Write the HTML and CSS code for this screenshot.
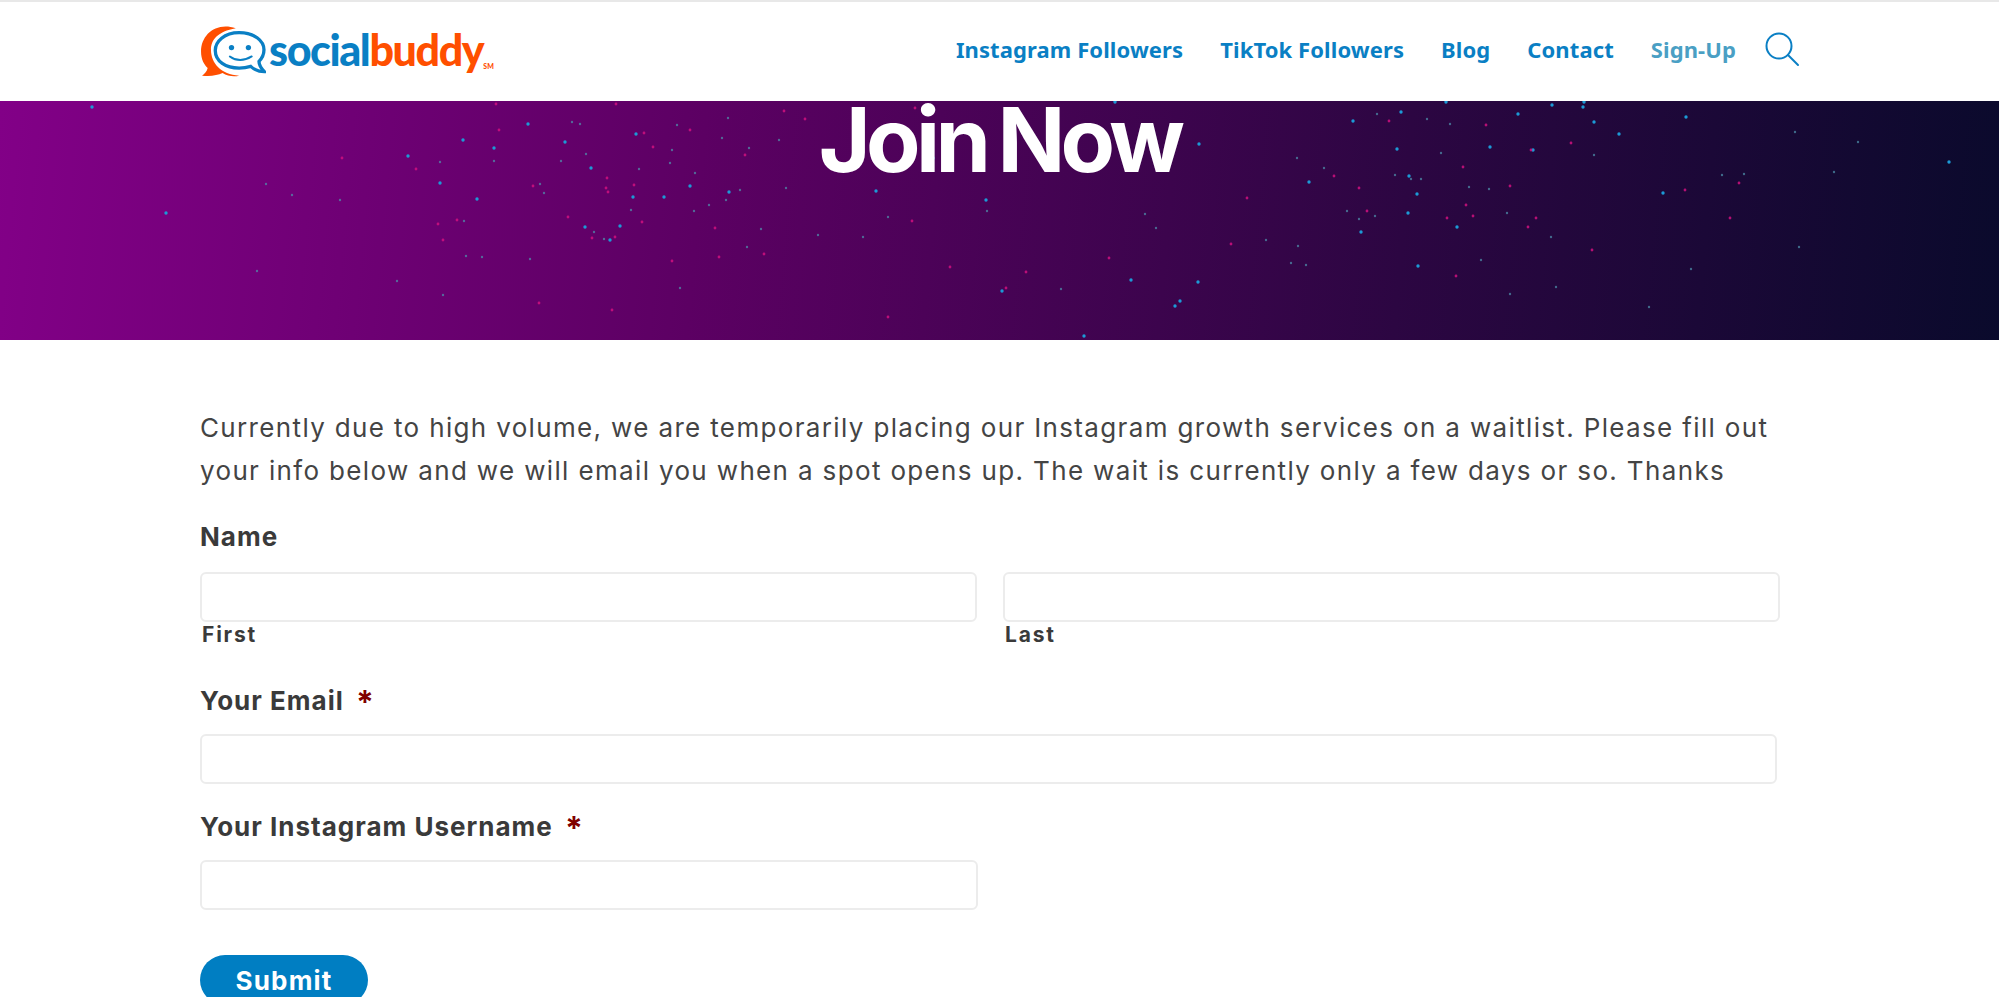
FILE: index.html
```html
<!DOCTYPE html>
<html lang="en">
<head>
    <meta charset="UTF-8">
    <meta name="viewport" content="width=device-width, initial-scale=1.0">
    <title>Join Now</title>

    <link rel="stylesheet" href="styles.css">

</head>
<body>

<header class="topbar">
    <div class="topbar-inner">
        <a class="logo" href="/">
            <svg class="logo-mark" viewBox="60 75 200 160" width="67" height="53">
                <path d="M170 85C110 65 65 105 65 155c0 25 10 40 20 50-2 10-10 19-17 23 27 4 47-2 62-8 15 10 35 12 50 8-55-3-85-38-85-78 0-30 20-55 75-65z" fill="#ff4f00"/>
                <path d="M180 98c-45 0-72 27-72 54 0 33 32 53 72 53 15 0 25-2 35-5 13 12 27 16 41 16-10-11-16-21-16-31 10-10 15-20 15-35 0-28-30-52-75-52z" fill="#fff" stroke="#0a7fc4" stroke-width="10"/>
                <circle cx="157" cy="143" r="8" fill="#0a7fc4"/>
                <circle cx="208" cy="143" r="8" fill="#0a7fc4"/>
                <path d="M152 170q30 22 66 0" fill="none" stroke="#0a7fc4" stroke-width="6" stroke-linecap="round"/>
            </svg>
            <span class="logo-word logo-social">social</span><span class="logo-word logo-buddy">buddy</span><span class="logo-sm">SM</span>
        </a>
        <nav class="mainnav">
            <a href="#">Instagram Followers</a>
            <a href="#">TikTok Followers</a>
            <a href="#">Blog</a>
            <a href="#">Contact</a>
            <a href="#" class="current">Sign-Up</a>
            <a href="#" class="search">
                <svg viewBox="0 0 36 36" width="36" height="36" fill="none" stroke="#0a7fc4" stroke-width="2">
                    <circle cx="15" cy="15" r="12.5"/>
                    <path d="M24 24l10 10" stroke-linecap="round"/>
                </svg>
            </a>
        </nav>
    </div>
</header>

<section class="hero">
    <svg class="stars" viewBox="0 0 1999 239">
        <path class="star-blue" d="M92 6h.01M166 112h.01M408 55h.01M494 47h.01M528 23h.01M565 41h.01M636 33h.01M591 67h.01M690 85h.01M633 96h.01M664 96h.01M729 91h.01M440 82h.01M463 39h.01M477 98h.01M620 125h.01M585 126h.01M610 139h.01M1115 1h.01M933 57h.01M876 90h.01M986 99h.01M1199 43h.01M1309 81h.01M1353 20h.01M1397 48h.01M1180 200h.01M1175 205h.01M1084 235h.01M1198 181h.01M1002 190h.01M1131 179h.01M1446 1h.01M1401 11h.01M1518 13h.01M1552 4h.01M1583 6h.01M1584 1h.01M1594 21h.01M1619 33h.01M1686 16h.01M1490 46h.01M1533 49h.01M1409 75h.01M1417 93h.01M1408 112h.01M1457 126h.01M1663 92h.01M1949 61h.01M1418 165h.01M1361 131h.01"/>
        <path class="star-dim" d="M266 83h.01M292 94h.01M340 99h.01M257 170h.01M440 61h.01M494 60h.01M572 21h.01M580 23h.01M561 60h.01M586 53h.01M639 68h.01M677 24h.01M672 49h.01M670 62h.01M695 72h.01M726 99h.01M544 92h.01M540 83h.01M631 109h.01M694 110h.01M709 104h.01M594 131h.01M604 138h.01M466 155h.01M482 156h.01M530 158h.01M747 146h.01M761 128h.01M722 37h.01M779 39h.01M749 47h.01M728 17h.01M443 194h.01M397 180h.01M680 187h.01M786 87h.01M740 89h.01M464 120h.01M987 110h.01M888 116h.01M818 134h.01M863 136h.01M1297 57h.01M1324 67h.01M1377 13h.01M1395 74h.01M1145 113h.01M1156 127h.01M1266 139h.01M1298 145h.01M1291 162h.01M1306 164h.01M1347 110h.01M1359 118h.01M1375 115h.01M1061 188h.01M1427 18h.01M1450 23h.01M1594 54h.01M1441 52h.01M1411 78h.01M1421 78h.01M1489 88h.01M1507 112h.01M1551 136h.01M1722 74h.01M1744 73h.01M1795 31h.01M1858 41h.01M1834 71h.01M1799 146h.01M1691 168h.01M1481 159h.01M1556 186h.01M1510 193h.01M1649 206h.01M1469 86h.01"/>
        <path class="star-pink" d="M342 57h.01M416 68h.01M499 29h.01M496 3h.01M616 3h.01M690 29h.01M784 10h.01M644 32h.01M653 46h.01M745 54h.01M607 77h.01M606 87h.01M608 91h.01M634 84h.01M533 85h.01M568 116h.01M457 119h.01M438 123h.01M443 139h.01M615 136h.01M592 137h.01M642 121h.01M672 160h.01M764 153h.01M539 202h.01M612 209h.01M719 156h.01M715 127h.01M805 18h.01M912 120h.01M1026 171h.01M1006 187h.01M1231 143h.01M1247 97h.01M1359 87h.01M1367 110h.01M1389 20h.01M1334 75h.01M888 216h.01M950 166h.01M1109 157h.01M915 7h.01M1486 24h.01M1531 49h.01M1571 42h.01M1463 66h.01M1510 85h.01M1466 104h.01M1447 117h.01M1473 115h.01M1536 117h.01M1528 126h.01M1592 149h.01M1730 117h.01M1739 82h.01M1456 175h.01M1685 89h.01"/>
    </svg>
    <h1>Join Now</h1>
</section>

<main class="container">
    <p class="intro">Currently due to high volume, we are temporarily placing our Instagram growth services on a waitlist. Please fill out your info below and we will email you when a spot opens up. The wait is currently only a few days or so. Thanks</p>

    <form class="signup">
        <label class="field-label">Name</label>
        <div class="name-row">
            <div>
                <input type="text" id="first">
                <label class="sub-label" for="first">First</label>
            </div>
            <div>
                <input type="text" id="last">
                <label class="sub-label" for="last">Last</label>
            </div>
        </div>

        <label class="field-label" for="email">Your Email <span class="req">*</span></label>
        <input type="email" id="email" class="email-input">

        <label class="field-label" for="insta">Your Instagram Username <span class="req">*</span></label>
        <input type="text" id="insta" class="half-input">

        <button type="submit">Submit</button>
    </form>
</main>

</body>
</html>
```

FILE: styles.css
```css
html, body {
    height: 997px;
    overflow: hidden;
}

body {
    margin: 0;
    background-color: #fff;
    color: #3a3a3a;
    font-family: Inter, sans-serif;
}

.topbar {
    height: 101px;
    box-sizing: border-box;
    border-top: 2px solid #e8e8e8;
    background-color: #fff;
}

.topbar-inner {
    height: 99px;
    padding: 0 199px 0 200px;
    display: flex;
    justify-content: space-between;
    align-items: center;
}

.logo {
    display: flex;
    align-items: center;
    text-decoration: none;
    font-family: Lato, sans-serif;
    font-weight: 900;
    font-size: 43px;
    line-height: 50px;
    letter-spacing: -1.4px;
}

.logo-mark {
    margin: 0 3px 0 -1px;
}

.logo-word {
    padding-bottom: 4px;
}

.logo-social {
    color: #0a7fc4;
}

.logo-buddy {
    color: #ff4f00;
}

.logo-sm {
    color: #ff4f00;
    font-size: 7px;
    line-height: 7px;
    letter-spacing: 0;
    align-self: flex-end;
    margin: 0 0 9px 0;
}

.mainnav {
    display: flex;
    align-items: center;
    gap: 37px;
    margin-top: -5px;
}

.mainnav a {
    color: #0a7fc4;
    text-decoration: none;
    font-family: "Noto Sans", sans-serif;
    font-weight: 700;
    font-size: 22px;
    letter-spacing: 0.1px;
}

.mainnav a.current {
    color: #4a9fc4;
}

.mainnav a.search {
    display: flex;
    margin-left: -9px;
}

.hero {
    position: relative;
    height: 239px;
    background: linear-gradient(95deg, #820087 0%, #5c0063 35%, #2c0642 70%, #0a0a2c 100%);
}

.stars {
    position: absolute;
    left: 0;
    top: 0;
    width: 100%;
    height: 100%;
    filter: blur(0.4px);
}

.stars path {
    fill: none;
    stroke-linecap: round;
}

.star-blue {
    stroke: #1c9ad6;
    stroke-width: 3.4;
}

.star-dim {
    stroke: #4f93ad;
    stroke-width: 2.4;
    opacity: 0.7;
}

.star-pink {
    stroke: #d0107f;
    stroke-width: 2.8;
    opacity: 0.85;
}

.hero h1 {
    position: relative;
    margin: 0;
    text-align: center;
    color: #fff;
    font-weight: 700;
    font-size: 89px;
    line-height: 77px;
    letter-spacing: -4.7px;
    word-spacing: -5px;
}

.container {
    padding: 66px 200px 0;
}

.intro {
    margin: 0;
    color: #444;
    font-size: 26px;
    line-height: 43px;
    letter-spacing: 1.35px;
}

.signup {
    margin-top: 27px;
}

.field-label {
    display: block;
    font-weight: 700;
    font-size: 26px;
    line-height: 36px;
    letter-spacing: 1px;
}

.req {
    color: #800000;
    font-size: 32px;
    line-height: 0;
    margin-left: 5px;
    vertical-align: -4px;
}

input {
    display: block;
    box-sizing: border-box;
    height: 50px;
    border: 2px solid #ececec;
    border-radius: 6px;
    background-color: #fff;
}

.name-row {
    display: grid;
    grid-template-columns: 777px 777px;
    gap: 26px;
    margin-top: 17px;
    margin-bottom: 35px;
}

.name-row input {
    width: 100%;
}

.sub-label {
    display: block;
    margin-left: 2px;
    font-weight: 700;
    font-size: 21px;
    line-height: 26px;
    letter-spacing: 1.8px;
}

.email-input {
    width: 1577px;
    margin-top: 15px;
    margin-bottom: 25px;
}

.half-input {
    width: 778px;
    margin-top: 15px;
}

button {
    display: block;
    margin-top: 45px;
    width: 168px;
    height: 50px;
    border: none;
    border-radius: 25px;
    background-color: #007ec2;
    color: #fff;
    font-family: Inter, sans-serif;
    font-weight: 700;
    font-size: 26px;
    letter-spacing: 1.2px;
}
```
